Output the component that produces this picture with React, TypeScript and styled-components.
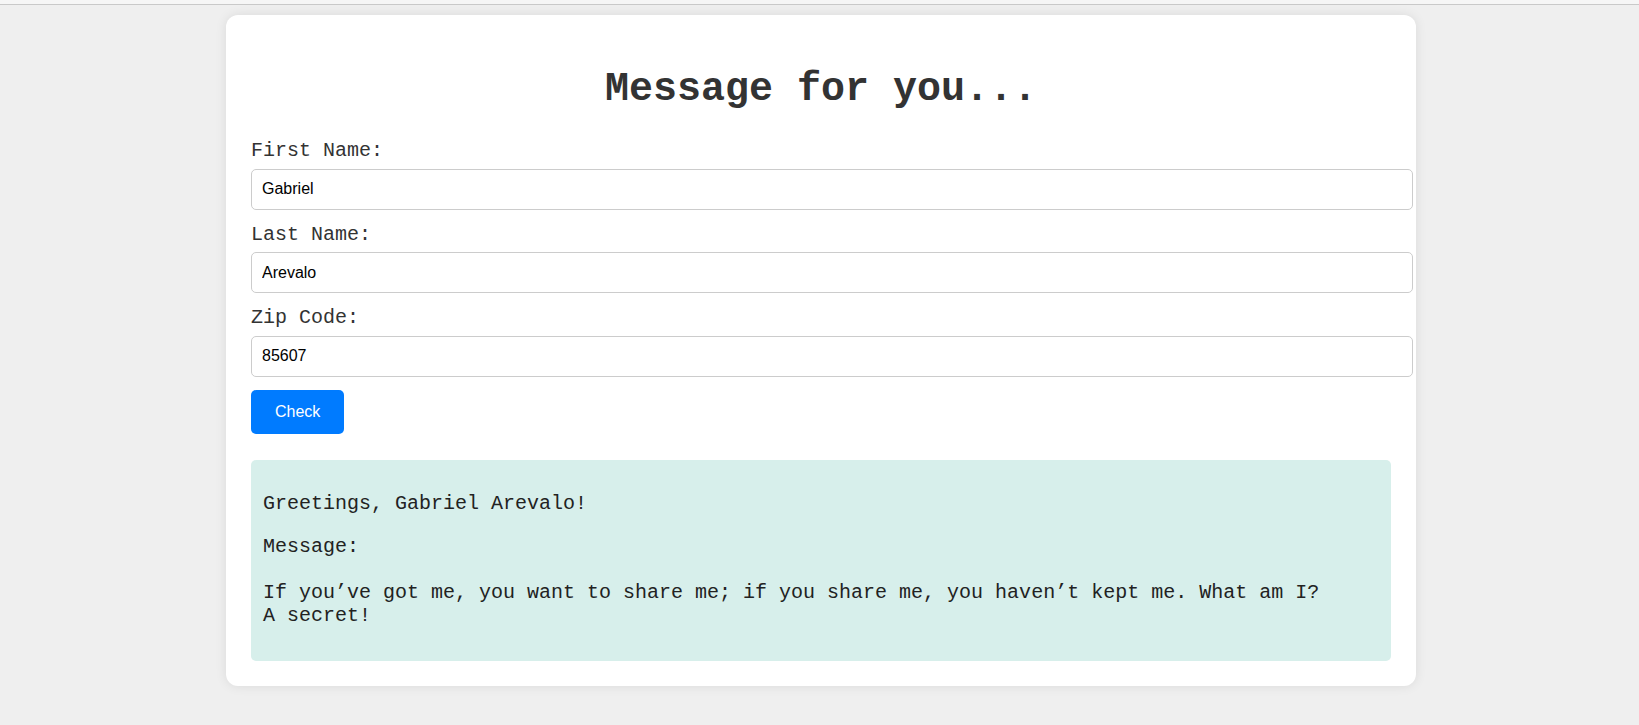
import React from "react";
import styled, { createGlobalStyle } from "styled-components";

const GlobalStyle = createGlobalStyle`
  html, body {
    margin: 0;
    padding: 0;
    background: #efefef;
  }
  body {
    font-family: "Liberation Mono", "Courier New", monospace;
    color: #333;
  }
`;

const TopStrip = styled.div`
  height: 4px;
  background: #f6f6f6;
  border-bottom: 1px solid #c9c9c9;
`;

const Page = styled.div`
  display: flex;
  justify-content: center;
  padding: 10px 0 40px 3px;
`;

const Card = styled.div`
  width: 1140px;
  padding: 25px;
  background: #ffffff;
  border-radius: 12px;
  box-shadow: 0 0 12px rgba(0, 0, 0, 0.09);
`;

const Title = styled.h1`
  margin: 0.67em 0;
  font-family: "Liberation Mono", "Courier New", monospace;
  font-size: 40px;
  line-height: 1.133;
  font-weight: bold;
  text-align: center;
  color: #333;
`;

const Form = styled.form`
  display: flex;
  flex-direction: column;
  align-items: flex-start;
  margin: 0;
`;

const Label = styled.label`
  display: block;
  font-family: "Liberation Mono", "Courier New", monospace;
  font-size: 20px;
  line-height: 1.133;
  color: #333;
  padding-top: 1px;
  margin-bottom: 6px;
`;

const Input = styled.input`
  display: block;
  box-sizing: content-box;
  width: 100%;
  height: 19px;
  padding: 10px;
  margin: 0 0 13px 0;
  border: 1px solid #cccccc;
  border-radius: 5px;
  background: #ffffff;
  font-family: "Liberation Sans", Arial, sans-serif;
  font-size: 16px;
  color: #000;
  outline: none;
`;

const Button = styled.button`
  padding: 13px 24px;
  border: none;
  border-radius: 5px;
  background: #007bff;
  color: #ffffff;
  font-family: "Liberation Sans", Arial, sans-serif;
  font-size: 16px;
  line-height: normal;
  cursor: pointer;
`;

const ResultBox = styled.div`
  margin-top: 26px;
  padding: 13px 12px;
  background: #d7efeb;
  border-radius: 5px;
  font-family: "Liberation Mono", "Courier New", monospace;
  font-size: 20px;
  line-height: 1.133;
  color: #222;
`;

const Line = styled.p<{ $top?: number }>`
  margin: ${(p) => (p.$top ?? 20)}px 0 20px 0;
`;

export default function App() {
  return (
    <>
      <GlobalStyle />
      <TopStrip />
      <Page>
        <Card>
          <Title>Message for you...</Title>
          <Form onSubmit={(e) => e.preventDefault()}>
            <Label htmlFor="first">First Name:</Label>
            <Input id="first" type="text" defaultValue="Gabriel" />
            <Label htmlFor="last">Last Name:</Label>
            <Input id="last" type="text" defaultValue="Arevalo" />
            <Label htmlFor="zip">Zip Code:</Label>
            <Input id="zip" type="text" defaultValue="85607" />
            <Button type="submit">Check</Button>
          </Form>
          <ResultBox>
            <Line>Greetings, Gabriel Arevalo!</Line>
            <Line>Message:</Line>
            <Line $top={24}>
              If you’ve got me, you want to share me; if you share me, you haven’t kept me. What am I?
              <br />
              A secret!
            </Line>
          </ResultBox>
        </Card>
      </Page>
    </>
  );
}
